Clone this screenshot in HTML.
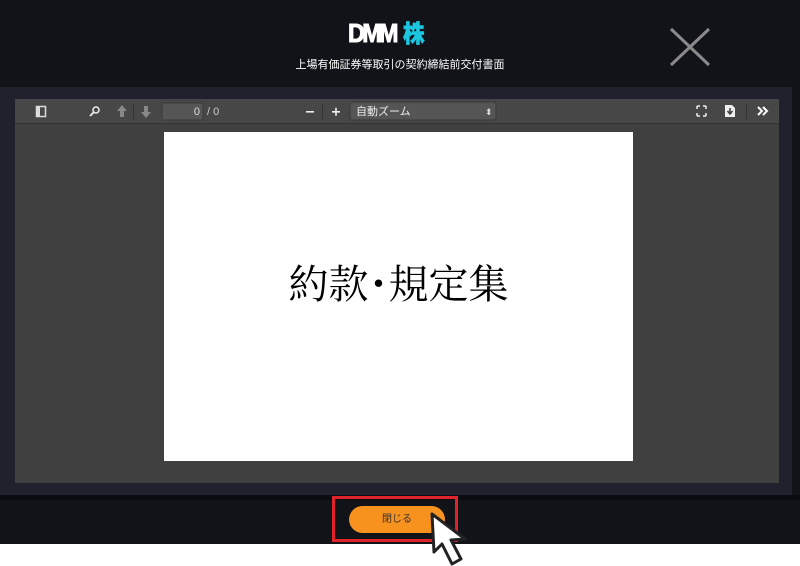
<!DOCTYPE html>
<html><head><meta charset="utf-8"><style>
*{margin:0;padding:0;box-sizing:border-box}
body{width:800px;height:566px;background:#fff;position:relative;overflow:hidden;font-family:"Liberation Sans","Noto Sans CJK JP",sans-serif}
.a{position:absolute}
</style></head><body>
<div class="a" style="left:0;top:0;width:800px;height:544px;background:#111318"></div>
<div class="a" style="left:0;top:87px;width:792px;height:408px;background:#1f222c"></div>
<div class="a" style="left:0;top:495px;width:800px;height:5px;background:#0b0c10"></div>
<div class="a" style="left:15px;top:99px;width:764px;height:384px;background:#404040"></div>
<div class="a" style="left:15px;top:99px;width:764px;height:25px;background:#474747;border-bottom:1px solid #333"></div>
<div class="a" style="left:348px;top:19px;font-weight:900;font-size:26px;line-height:28px;color:#fff;letter-spacing:-3px;transform:scaleX(0.9);transform-origin:top left;-webkit-text-stroke:1px #fff">DMM<span style="color:#1cc6e0;margin-left:8px;font-size:24px;letter-spacing:0;-webkit-text-stroke:0.5px #1cc6e0">株</span></div>
<div class="a" style="left:0;width:800px;top:56px;text-align:center;color:#fff;font-size:11px">上場有価証券等取引の契約締結前交付書面</div>
<svg class="a" style="left:668px;top:27px" width="44" height="40"><path d="M3 2L41 38M41 2L3 38" stroke="#8a8a8a" stroke-width="3"/></svg>
<svg class="a" style="left:0;top:99px" width="800" height="26">
<rect x="36.5" y="7.5" width="9" height="10" fill="none" stroke="#ddd" stroke-width="1.5"/><rect x="37" y="8" width="3" height="9" fill="#ddd"/>
<circle cx="96" cy="11" r="3" fill="none" stroke="#eee" stroke-width="1.5"/><path d="M94 13L90 17" stroke="#eee" stroke-width="1.8"/>
<path d="M122 6l-5 6h3v6h4v-6h3z" fill="#888"/><rect x="133" y="5" width="1" height="15" fill="#333"/>
<path d="M146 19l-5 -6h3v-6h4v6h3z" fill="#888"/>
<rect x="162" y="4" width="41" height="17" rx="2" fill="#555" stroke="#3a3a3a"/>
<text x="200" y="16" fill="#ddd" font-size="11" text-anchor="end" font-family="Liberation Sans">0</text>
<text x="207" y="16" fill="#ccc" font-size="11" font-family="Liberation Sans">/ 0</text>
<rect x="306" y="12" width="8" height="1.6" fill="#eee"/><rect x="322" y="5" width="1" height="15" fill="#333"/>
<path d="M332 12.8h8M336 8.8v8" stroke="#eee" stroke-width="1.6"/>
<rect x="350" y="3" width="146" height="18" rx="2" fill="#555" stroke="#3a3a3a"/>
<text x="356" y="16" fill="#eee" font-size="11" font-family="Liberation Sans,Noto Sans CJK JP">自動ズーム</text>
<text x="485" y="16" fill="#ddd" font-size="9">⬍</text>
<path d="M697 7h3M697 7v3M706 7h-3M706 7v3M697 17h3M697 17v-3M706 17h-3M706 17v-3" stroke="#eee" stroke-width="1.5"/>
<path d="M725 6h7l3 3v9h-10z" fill="#eee"/><path d="M730 9v5M727.5 12l2.5 3 2.5-3" stroke="#444" stroke-width="1.6" fill="none"/>
<rect x="746" y="5" width="1" height="15" fill="#333"/>
<path d="M758 8l4 4-4 4M763 8l4 4-4 4" stroke="#fff" stroke-width="2" fill="none"/>
</svg>
<div class="a" style="left:164px;top:132px;width:469px;height:329px;background:#fff"></div>
<div class="a" style="left:164px;top:262px;width:469px;text-align:center;font-family:'Liberation Serif','Noto Serif CJK SC',serif;font-size:40px;line-height:46px;color:#000">約款<span style="margin:0 -10px">・</span>規定集</div>
<div class="a" style="left:332px;top:496px;width:126px;height:46px;border:3px solid #e0222a"></div>
<div class="a" style="left:349px;top:506px;width:96px;height:27px;border-radius:14px;background:#f7921e;color:#333;font-size:10px;text-align:center;line-height:27px">閉じる</div>
<svg class="a" style="left:426px;top:510px" width="52" height="56"><path d="M6 4L8 42l8-8 10 20 9-5-10-19 14-1z" fill="#fff" stroke="#222" stroke-width="3" stroke-linejoin="round"/></svg>
</body></html>
